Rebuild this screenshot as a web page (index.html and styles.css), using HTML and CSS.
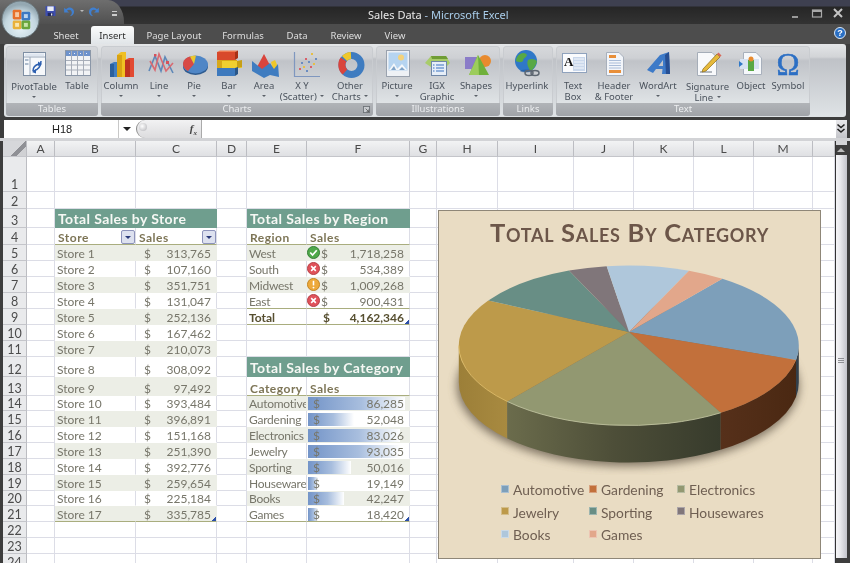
FILE: index.html
```html
<!DOCTYPE html>
<html lang="en">
<head>
<meta charset="utf-8">
<title>Sales Data - Microsoft Excel</title>
<link rel="stylesheet" href="styles.css">
</head>
<body>
<div class="app">
  <header class="titlebar">
    <div class="qat">
      <svg class="qi" viewBox="0 0 12 12"><rect x="0.5" y="0.5" width="11" height="11" rx="1" fill="#3f4fb0"/><rect x="2.5" y="1" width="7" height="5" fill="#e8ecf6"/><rect x="3" y="8" width="6" height="3.5" fill="#20285c"/><rect x="6.5" y="8.6" width="1.5" height="2.4" fill="#dfe3f0"/></svg>
      <svg class="qi gap1" viewBox="0 0 12 12"><path d="M2 2.5 V7 H6.5 L4.6 5.2 C6.4 3.7 8.6 4.4 9 6.6 C9.3 8 8.4 9.6 7 10.4 C9.8 10.3 11.4 8 11 5.6 C10.4 2.4 6.6 1 3.7 3.9 Z" fill="#3f7fd0"/></svg>
      <span class="qdrop"></span>
      <svg class="qi gap2" viewBox="0 0 12 12"><path d="M10 2.5 V7 H5.5 L7.4 5.2 C5.6 3.7 3.4 4.4 3 6.6 C2.7 8 3.6 9.6 5 10.4 C2.2 10.3 .6 8 1 5.6 C1.6 2.4 5.4 1 8.3 3.9 Z" fill="#3f7fd0"/></svg>
      <span class="qmore"></span>
    </div>
    <h1 class="wintitle">Sales Data <span class="dash">-</span> <span class="appname">Microsoft Excel</span></h1>
    <div class="winbtns">
      <svg class="wb" viewBox="0 0 12 12"><rect x="2" y="9" width="6" height="2" fill="#9a9a9a"/></svg>
      <svg class="wb" viewBox="0 0 12 12"><rect x="1.5" y="3" width="9" height="7" fill="none" stroke="#a8a8a8" stroke-width="1.2"/><rect x="1.5" y="3" width="9" height="2" fill="#a8a8a8"/></svg>
      <svg class="wb" viewBox="0 0 12 12"><path d="M2 2 L10 10 M10 2 L2 10" stroke="#c4c4c4" stroke-width="2"/></svg>
    </div>
  </header>

  <svg class="officebtn" viewBox="0 0 40 40">
    <defs>
      <radialGradient id="orb" cx="50%" cy="70%" r="60%"><stop offset="0" stop-color="#e8f4fa"/><stop offset=".7" stop-color="#c3d6df"/><stop offset="1" stop-color="#94a8b2"/></radialGradient>
    </defs>
    <circle cx="20" cy="20" r="19" fill="url(#orb)" stroke="#6d7a80"/>
    <rect x="12" y="10" width="9" height="10" rx="1.5" fill="#e8702a"/>
    <rect x="21" y="12" width="9" height="9" rx="1.5" fill="#3d79c4"/>
    <rect x="12" y="21" width="9" height="9" rx="1.5" fill="#e9b13a"/>
    <rect x="21" y="21" width="9" height="9" rx="1.5" fill="#6aa63c"/>
    <rect x="14.500" y="12.500" width="4" height="5" fill="#f6c8a4"/>
    <rect x="14.500" y="23.500" width="4" height="4" fill="#f8e6b0"/>
    <rect x="23.500" y="14.500" width="4" height="4" fill="#bcd4ee"/>
    <rect x="23.500" y="23.500" width="4" height="4" fill="#c8e4a8"/>
  </svg>

  <nav class="tabs">
    <a class="tab t51">Sheet</a>
    <a class="tab t43 active">Insert</a>
    <a class="tab t80">Page Layout</a>
    <a class="tab t58">Formulas</a>
    <a class="tab t50">Data</a>
    <a class="tab t48">Review</a>
    <a class="tab t50">View</a>
    <span class="help">?</span>
  </nav>

  <section class="ribbon">
    <div class="group gw92">
      <div class="items">
        <div class="btn w56">
          <svg class="ico" viewBox="0 0 30 30"><rect x="4.500" y="3.500" width="22" height="23" fill="#f6f8fb" stroke="#7f8fa4"/><path d="M5 8 H26 M11 8 V26" stroke="#9aa8ba"/><rect x="6" y="4.500" width="19" height="2.500" fill="#dfe6f0"/><rect x="6" y="10" width="3.500" height="2" fill="#aebccd"/><rect x="6" y="14" width="3.500" height="2" fill="#aebccd"/><path d="M14 22 C14 18 16 16 20 15 M22 12 C22 17 20 20 15 22" fill="none" stroke="#2c5fb0" stroke-width="1.500"/><path d="M19 12.500 L23 15 L19 17 Z M17 20 L13 23 L17 24.500 Z" fill="#2c5fb0"/></svg>
          <span class="lab low">PivotTable</span><i class="caret"></i>
        </div>
        <div class="btn w30">
          <svg class="ico" viewBox="0 0 30 30"><rect x="3.500" y="1.500" width="25" height="25" fill="#f2f3f5" stroke="#8b97a8"/><rect x="4" y="2" width="24" height="5" fill="#6e92cb"/><path d="M9.500 2 V26 M15.500 2 V26 M21.500 2 V26 M4 11.500 H28 M4 16 H28 M4 21 H28" stroke="#a7adb8"/><path d="M7 4.500 H8 M12 4.500 H13 M18 4.500 H19 M24 4.500 H25" stroke="#e8eefa"/></svg>
          <span class="lab">Table</span>
        </div>
      </div>
      <div class="gname">Tables</div>
    </div>

    <div class="group gw272">
      <div class="items">
        <div class="btn w40">
          <svg class="ico" viewBox="0 0 30 30"><path d="M4 15 L8 13 H12 V28 H4 Z" fill="#3f7cc0"/><rect x="4" y="15" width="4" height="13" fill="#2b5f9c"/><path d="M11 6 L15 3 H20 V28 H11 Z" fill="#f0c023"/><rect x="11" y="6" width="5" height="22" fill="#d8a213"/><path d="M19 11 L23 9 H28 V28 H19 Z" fill="#e24a32"/><rect x="19" y="11" width="5" height="17" fill="#bd3220"/></svg>
          <span class="lab">Column</span><i class="caret"></i>
        </div>
        <div class="btn w36">
          <svg class="ico" viewBox="0 0 30 30"><path d="M5 22 L11 7 L17 22 L21 8 L29 24" fill="none" stroke="#5f88b8" stroke-width="1.600"/><path d="M6 12 L11 21 L15 5 L22 22 L29 14" fill="none" stroke="#d86a72" stroke-width="1.600"/><rect x="22" y="12" width="3" height="3" fill="#d8505a"/><rect x="10" y="5" width="2.500" height="2.500" fill="#d8505a"/></svg>
          <span class="lab">Line</span><i class="caret"></i>
        </div>
        <div class="btn w34">
          <svg class="ico" viewBox="0 0 30 30"><ellipse cx="16.500" cy="17.500" rx="12.500" ry="8.500" fill="#2e5b90"/><ellipse cx="16.500" cy="15.500" rx="12.500" ry="9" fill="#4f86c6"/><path d="M15 15 L11 7.500 C7 8.500 4 11.500 4 15 C4 18 6 20.500 9 22 Z" fill="#d84a44"/><path d="M15 15 L11 7.500 C13 6.800 15 6.500 17 6.500 Z" fill="#efc72a"/></svg>
          <span class="lab">Pie</span><i class="caret"></i>
        </div>
        <div class="btn w36">
          <svg class="ico" viewBox="0 0 30 30"><rect x="3" y="11" width="20" height="8" fill="#d8a818"/><rect x="8" y="12" width="20" height="7" fill="#f0cf30"/><path d="M23 12 L28 11 V18 L23 19 Z" fill="#c79f15"/><rect x="3" y="3" width="18" height="8" fill="#d8482c"/><path d="M3 3 L6 1.500 H24 L21 3 Z" fill="#ef7a52"/><path d="M21 3 L24 1.500 V9 L21 11 Z" fill="#a93016"/><rect x="3" y="19" width="18" height="8" fill="#3d79bd"/><path d="M21 19 L24 18 V25 L21 27 Z" fill="#2a5688"/></svg>
          <span class="lab">Bar</span><i class="caret"></i>
        </div>
        <div class="btn w34">
          <svg class="ico" viewBox="0 0 30 30"><path d="M15 5 L23 20 L12 24 L8 18 Z" fill="#d9443c"/><path d="M22 13 L26 11 L29 18 L24 22 Z" fill="#efc72a"/><path d="M3 12 L13 20 L21 14 L25 20 L29 15 L30 28 L21 26 L15 29 L3 22 Z" fill="#3f7cc0"/></svg>
          <span class="lab">Area</span><i class="caret"></i>
        </div>
        <div class="btn w42">
          <svg class="ico over" viewBox="0 0 30 30"><path d="M7.500 3 V27.500 H33" fill="none" stroke="#7f97bf" stroke-width="1.200"/><g fill="#d8606a"><rect x="12" y="19" width="2" height="2"/><rect x="18" y="9" width="2" height="2"/><rect x="23" y="17" width="2" height="2"/></g><g fill="#6a8cc0"><rect x="14" y="13" width="2" height="2"/><rect x="21" y="12" width="2" height="2"/><rect x="28" y="9" width="2" height="2"/><rect x="19" y="21" width="2" height="2"/></g><g fill="#e6bf45"><rect x="24" y="4" width="2" height="2"/><rect x="16" y="17" width="2" height="2"/><rect x="26" y="14" width="2" height="2"/></g></svg>
          <span class="lab">X Y<br>(Scatter) <i class="caret inl"></i></span>
        </div>
        <div class="btn w54">
          <svg class="ico" viewBox="0 0 30 30"><circle cx="16.500" cy="16" r="9.500" fill="none" stroke="#3f7cc0" stroke-width="7"/><path d="M8.500 10.500 A9.500 9.500 0 0 0 10 23" fill="none" stroke="#d9443c" stroke-width="7"/><path d="M9.500 9.500 A9.500 9.500 0 0 1 16 6.500" fill="none" stroke="#efc72a" stroke-width="7"/></svg>
          <span class="lab">Other<br>Charts <i class="caret inl"></i></span>
        </div>
      </div>
      <div class="gname">Charts<svg class="launch" viewBox="0 0 8 8"><rect x=".5" y=".5" width="7" height="7" fill="#c9ccd0" stroke="#6e7378"/><path d="M3 3 L6.500 6.500 M6.500 4 V6.500 H4" fill="none" stroke="#444" stroke-width=".8"/></svg></div>
    </div>

    <div class="group gw124">
      <div class="items">
        <div class="btn w42">
          <svg class="ico" viewBox="0 0 30 30"><rect x="4.500" y="1.500" width="23" height="26" fill="#eef1f5" stroke="#9aa2ae"/><rect x="6.500" y="3.500" width="19" height="18" fill="#b6d4f0"/><circle cx="19" cy="8.500" r="3" fill="#f4d27a"/><path d="M7 21 L12 14 L16 21 Z M14 21 L20 15 L25 21 Z" fill="#f4f7fa"/><path d="M9 21 L12 17 L14 21 Z M17 21 L20 18 L23 21 Z" fill="#7fa3c8"/></svg>
          <span class="lab">Picture</span><i class="caret"></i>
        </div>
        <div class="btn w38">
          <svg class="ico" viewBox="0 0 30 30"><path d="M3 14 L9 7 H24 L28 14 L24 18 H9 Z" fill="#a8cc6a"/><path d="M9 7 H24 L26 10 H10 Z" fill="#6f9c35"/><rect x="9.500" y="12.500" width="15" height="14" fill="#e6eef8" stroke="#6f87a8"/><path d="M14 16 H22 M14 19 H22 M14 22 H22" stroke="#3a72c0"/><path d="M11 16 H12.500 M11 19 H12.500 M11 22 H12.500" stroke="#3a72c0"/></svg>
          <span class="lab">IGX<br>Graphic</span>
        </div>
        <div class="btn w40">
          <svg class="ico" viewBox="0 0 30 30"><rect x="4" y="8" width="13" height="12" fill="#8a7cc8"/><circle cx="24" cy="12" r="6" fill="#e88a2e"/><path d="M17 6 L28 26 H8 Z" fill="#6fb03a"/><path d="M17 6 L18 26 H8 Z" fill="#9ccc5c"/></svg>
          <span class="lab">Shapes</span><i class="caret"></i>
        </div>
      </div>
      <div class="gname">Illustrations</div>
    </div>

    <div class="group gw50">
      <div class="items">
        <div class="btn w48">
          <svg class="ico" viewBox="0 0 30 30"><circle cx="14" cy="12" r="11" fill="#2f78c8"/><path d="M8 5 C11 3 14 4 15 6 C14 9 11 9 11 12 C9 14 6 13 4 12 C4 9 6 6 8 5 Z M16 11 C19 9 23 10 25 12 C24 17 21 21 18 22 C17 19 14 15 16 11 Z" fill="#58a845"/><ellipse cx="14" cy="22" rx="6" ry="1.500" fill="#1f528f" opacity=".5"/><ellipse cx="17" cy="24" rx="4" ry="2.500" fill="none" stroke="#5d6670" stroke-width="1.500"/><ellipse cx="23" cy="24" rx="4" ry="2.500" fill="none" stroke="#5d6670" stroke-width="1.500"/></svg>
          <span class="lab">Hyperlink</span>
        </div>
      </div>
      <div class="gname">Links</div>
    </div>

    <div class="group gw254">
      <div class="items">
        <div class="btn w34">
          <svg class="ico" viewBox="0 0 30 30"><rect x="4.500" y="4.500" width="24" height="19" fill="#fafbfd" stroke="#8fa2bd"/><rect x="15" y="8" width="12" height="14" fill="#cad8ec"/><path d="M16 10 H26 M16 13 H26 M16 16 H26 M16 19 H26" stroke="#f4f7fb"/><text x="6" y="17" class="boxa">A</text></svg>
          <span class="lab">Text<br>Box</span>
        </div>
        <div class="btn w48">
          <svg class="ico" viewBox="0 0 30 30"><path d="M7.500 3.500 H20 L24.500 8 V26.500 H7.500 Z" fill="#f2f5fa" stroke="#a8b0bc"/><rect x="10" y="6" width="7" height="3" fill="#e88f3a"/><path d="M10 11.500 H22 M10 14 H22 M10 16.500 H22 M10 19 H22" stroke="#a9bcd8"/><rect x="10" y="21" width="12" height="3" fill="#e88f3a"/></svg>
          <span class="lab">Header<br>&amp; Footer</span>
        </div>
        <div class="btn w40">
          <svg class="ico" viewBox="0 0 30 30"><path d="M4 21 L17 6 L26 3 L27 25 L19 25 L19.500 20 L13 20 L10 24 Z M15.500 17 L20 17 L20 11 Z" fill="#3d7ac8" fill-rule="evenodd"/><path d="M26 3 L27 25 L23 25 L22 6 Z" fill="#274f92"/></svg>
          <span class="lab">WordArt</span><i class="caret"></i>
        </div>
        <div class="btn w59">
          <svg class="ico" viewBox="0 0 30 30"><path d="M4.500 3.500 H19 L23.500 8 V26.500 H4.500 Z" fill="#f8f9fb" stroke="#a5adb8"/><path d="M7 23 H19" stroke="#6f7884"/><path d="M10 20 L24 5 L27 8 L13 22 L9 23 Z" fill="#e6b93a" stroke="#8a6a18" stroke-width=".7"/><path d="M24 5 L25.500 3.500 L28.500 6.500 L27 8 Z" fill="#d86a5a"/></svg>
          <span class="lab low">Signature<br>Line <i class="caret inl"></i></span>
        </div>
        <div class="btn w28">
          <svg class="ico" viewBox="0 0 30 30"><path d="M7.500 3.500 H20 L25.500 9 V25.500 H7.500 Z" fill="#f6f8fb" stroke="#a8b0bc"/><rect x="4" y="10" width="19" height="10" fill="#d6e2f2"/><path d="M3 12 L7 15 L3 18 Z" fill="#2f78c8"/><rect x="12" y="11" width="6" height="11" fill="#58a845"/><circle cx="15" cy="10" r="2.500" fill="#e88a2e"/></svg>
          <span class="lab">Object</span>
        </div>
        <div class="btn w46">
          <span class="omega">Ω</span>
          <span class="lab">Symbol</span>
        </div>
      </div>
      <div class="gname">Text</div>
    </div>
  </section>

  <section class="formula">
    <div class="namebox">H18</div>
    <div class="namedrop"></div>
    <div class="fxpill"><i class="knob"></i><em class="fx">f<sub>x</sub></em></div>
    <div class="finput"></div>
    <div class="fexpand"><svg viewBox="0 0 10 12"><path d="M1.500 1.500 L5 4.500 L8.500 1.500 M1.500 6 L5 9 L8.500 6" fill="none" stroke="#222" stroke-width="1.600"/></svg></div>
  </section>

  <main class="workarea">
    <table class="sheet">
      <colgroup>
        <col class="c24"><col class="c28"><col class="c81"><col class="c81"><col class="c30"><col class="c60"><col class="c103"><col class="c27"><col class="c61"><col class="c76"><col class="c60"><col class="c60"><col class="c60"><col class="c59"><col class="c22">
      </colgroup>
      <thead>
        <tr class="h16 colhdr"><th class="corner"></th><th>A</th><th>B</th><th>C</th><th>D</th><th>E</th><th>F</th><th>G</th><th>H</th><th>I</th><th>J</th><th>K</th><th>L</th><th>M</th><th></th></tr>
      </thead>
      <tbody>
        <tr class="h35"><th>1</th><td></td><td></td><td></td><td></td><td></td><td></td><td></td><td></td><td></td><td></td><td></td><td></td><td></td><td></td></tr>
        <tr class="h17"><th>2</th><td></td><td></td><td></td><td></td><td></td><td></td><td></td><td></td><td></td><td></td><td></td><td></td><td></td><td></td></tr>
        <tr class="h19"><th>3</th><td></td><td class="ttl" colspan="2">Total Sales by Store</td><td></td><td class="ttl" colspan="2">Total Sales by Region</td><td></td><td></td><td></td><td></td><td></td><td></td><td></td><td></td></tr>
        <tr class="h17"><th>4</th><td></td><td class="head"><div class="hwrap">Store<span class="filter"></span></div></td><td class="head"><div class="hwrap">Sales<span class="filter"></span></div></td><td></td><td class="head">Region</td><td class="head">Sales</td><td></td><td></td><td></td><td></td><td></td><td></td><td></td><td></td></tr>
        <tr class="h16"><th>5</th><td></td><td class="band nm">Store 1</td><td class="band"><div class="amt"><span>$</span><span>313,765</span></div></td><td></td><td class="band nm">West</td><td class="band"><div class="amt rg"><svg class="flag" viewBox="0 0 14 14"><circle cx="7" cy="7" r="6.500" fill="#4fa84a" stroke="#2f7a30"/><path d="M3.500 7 L6 9.800 L10.500 4.500" fill="none" stroke="#fff" stroke-width="1.800"/></svg><span>$</span><span>1,718,258</span></div></td><td></td><td></td><td></td><td></td><td></td><td></td><td></td><td></td></tr>
        <tr class="h16"><th>6</th><td></td><td class="white nm">Store 2</td><td class="white"><div class="amt"><span>$</span><span>107,160</span></div></td><td></td><td class="white nm">South</td><td class="white"><div class="amt rg"><svg class="flag" viewBox="0 0 14 14"><circle cx="7" cy="7" r="6.500" fill="#e0525a" stroke="#b23a40"/><path d="M4.500 4.500 L9.500 9.500 M9.500 4.500 L4.500 9.500" stroke="#fff" stroke-width="1.700"/></svg><span>$</span><span>534,389</span></div></td><td></td><td></td><td></td><td></td><td></td><td></td><td></td><td></td></tr>
        <tr class="h16"><th>7</th><td></td><td class="band nm">Store 3</td><td class="band"><div class="amt"><span>$</span><span>351,751</span></div></td><td></td><td class="band nm">Midwest</td><td class="band"><div class="amt rg"><svg class="flag" viewBox="0 0 14 14"><circle cx="7" cy="7" r="6.500" fill="#eda93a" stroke="#c07f1c"/><path d="M7 3 V8" stroke="#fff" stroke-width="1.700"/><circle cx="7" cy="10.300" r="1" fill="#fff"/></svg><span>$</span><span>1,009,268</span></div></td><td></td><td></td><td></td><td></td><td></td><td></td><td></td><td></td></tr>
        <tr class="h16"><th>8</th><td></td><td class="white nm">Store 4</td><td class="white"><div class="amt"><span>$</span><span>131,047</span></div></td><td></td><td class="white nm tline">East</td><td class="white tline"><div class="amt rg"><svg class="flag" viewBox="0 0 14 14"><circle cx="7" cy="7" r="6.500" fill="#e0525a" stroke="#b23a40"/><path d="M4.500 4.500 L9.500 9.500 M9.500 4.500 L4.500 9.500" stroke="#fff" stroke-width="1.700"/></svg><span>$</span><span>900,431</span></div></td><td></td><td></td><td></td><td></td><td></td><td></td><td></td><td></td></tr>
        <tr class="h16"><th>9</th><td></td><td class="band nm">Store 5</td><td class="band"><div class="amt"><span>$</span><span>252,136</span></div></td><td></td><td class="white total tline">Total</td><td class="white total tline resize"><div class="amt rgt"><span>$</span><span>4,162,346</span></div></td><td></td><td></td><td></td><td></td><td></td><td></td><td></td><td></td></tr>
        <tr class="h16"><th>10</th><td></td><td class="white nm">Store 6</td><td class="white"><div class="amt"><span>$</span><span>167,462</span></div></td><td></td><td></td><td></td><td></td><td></td><td></td><td></td><td></td><td></td><td></td><td></td></tr>
        <tr class="h16"><th>11</th><td></td><td class="band nm">Store 7</td><td class="band"><div class="amt"><span>$</span><span>210,073</span></div></td><td></td><td></td><td></td><td></td><td></td><td></td><td></td><td></td><td></td><td></td><td></td></tr>
        <tr class="h20"><th>12</th><td></td><td class="white nm">Store 8</td><td class="white"><div class="amt"><span>$</span><span>308,092</span></div></td><td></td><td class="ttl" colspan="2">Total Sales by Category</td><td></td><td></td><td></td><td></td><td></td><td></td><td></td><td></td></tr>
        <tr class="h19"><th>13</th><td></td><td class="band nm">Store 9</td><td class="band"><div class="amt"><span>$</span><span>97,492</span></div></td><td></td><td class="head">Category</td><td class="head">Sales</td><td></td><td></td><td></td><td></td><td></td><td></td><td></td><td></td></tr>
        <tr class="h15"><th>14</th><td></td><td class="white nm">Store 10</td><td class="white"><div class="amt"><span>$</span><span>393,484</span></div></td><td></td><td class="band nm">Automotive</td><td class="band"><div class="amt cat bar" style="background-size:97px 13px"><span>$</span><span>86,285</span></div></td><td></td><td></td><td></td><td></td><td></td><td></td><td></td><td></td></tr>
        <tr class="h16"><th>15</th><td></td><td class="band nm">Store 11</td><td class="band"><div class="amt"><span>$</span><span>396,891</span></div></td><td></td><td class="white nm">Gardening</td><td class="white"><div class="amt cat bar" style="background-size:46px 13px"><span>$</span><span>52,048</span></div></td><td></td><td></td><td></td><td></td><td></td><td></td><td></td><td></td></tr>
        <tr class="h16"><th>16</th><td></td><td class="white nm">Store 12</td><td class="white"><div class="amt"><span>$</span><span>151,168</span></div></td><td></td><td class="band nm">Electronics</td><td class="band"><div class="amt cat bar" style="background-size:92px 13px"><span>$</span><span>83,026</span></div></td><td></td><td></td><td></td><td></td><td></td><td></td><td></td><td></td></tr>
        <tr class="h16"><th>17</th><td></td><td class="band nm">Store 13</td><td class="band"><div class="amt"><span>$</span><span>251,390</span></div></td><td></td><td class="white nm">Jewelry</td><td class="white"><div class="amt cat bar" style="background-size:92px 13px"><span>$</span><span>93,035</span></div></td><td></td><td></td><td></td><td></td><td></td><td></td><td></td><td></td></tr>
        <tr class="h16"><th>18</th><td></td><td class="white nm">Store 14</td><td class="white"><div class="amt"><span>$</span><span>392,776</span></div></td><td></td><td class="band nm">Sporting</td><td class="band"><div class="amt cat bar" style="background-size:43px 13px"><span>$</span><span>50,016</span></div></td><td></td><td></td><td></td><td></td><td></td><td></td><td></td><td></td></tr>
        <tr class="h16"><th>19</th><td></td><td class="band nm">Store 15</td><td class="band"><div class="amt"><span>$</span><span>259,654</span></div></td><td></td><td class="white nm">Houseware</td><td class="white"><div class="amt cat bar" style="background-size:10px 13px"><span>$</span><span>19,149</span></div></td><td></td><td></td><td></td><td></td><td></td><td></td><td></td><td></td></tr>
        <tr class="h15"><th>20</th><td></td><td class="white nm">Store 16</td><td class="white"><div class="amt"><span>$</span><span>225,184</span></div></td><td></td><td class="band nm">Books</td><td class="band"><div class="amt cat bar" style="background-size:36px 13px"><span>$</span><span>42,247</span></div></td><td></td><td></td><td></td><td></td><td></td><td></td><td></td><td></td></tr>
        <tr class="h16"><th>21</th><td></td><td class="band nm tline">Store 17</td><td class="band tline resize"><div class="amt"><span>$</span><span>335,785</span></div></td><td></td><td class="white nm tline">Games</td><td class="white tline resize"><div class="amt cat bar" style="background-size:10px 13px"><span>$</span><span>18,420</span></div></td><td></td><td></td><td></td><td></td><td></td><td></td><td></td><td></td></tr>
        <tr class="h16"><th>22</th><td></td><td></td><td></td><td></td><td></td><td></td><td></td><td></td><td></td><td></td><td></td><td></td><td></td><td></td></tr>
        <tr class="h16"><th>23</th><td></td><td></td><td></td><td></td><td></td><td></td><td></td><td></td><td></td><td></td><td></td><td></td><td></td><td></td></tr>
        <tr class="h16"><th>24</th><td></td><td></td><td></td><td></td><td></td><td></td><td></td><td></td><td></td><td></td><td></td><td></td><td></td><td></td></tr>
      </tbody>
    </table>

    <div class="scroll">
      <div class="sgrip"></div>
      <div class="sup"></div>
      <div class="strack"><span class="sthumb"></span></div>
      <div class="sfoot"></div>
    </div>

    <figure class="chart">
      <figcaption class="ctitle">Total Sales By Category</figcaption>
      <svg class="pie" viewBox="438 250 383 225">
        <defs>
          <filter id="soft" x="-20%" y="-30%" width="140%" height="160%"><feGaussianBlur stdDeviation="5"/></filter>
          <linearGradient id="sideE" gradientUnits="userSpaceOnUse" x1="507" y1="0" x2="721" y2="0"><stop offset="0" stop-color="#6b6c4c"/><stop offset=".5" stop-color="#4d4e38"/><stop offset="1" stop-color="#373b2c"/></linearGradient>
          <linearGradient id="sideJ" gradientUnits="userSpaceOnUse" x1="459" y1="0" x2="507" y2="0"><stop offset="0" stop-color="#9c7f38"/><stop offset="1" stop-color="#a88a40"/></linearGradient>
          <linearGradient id="sideG" gradientUnits="userSpaceOnUse" x1="721" y1="0" x2="796" y2="0"><stop offset="0" stop-color="#56301a"/><stop offset="1" stop-color="#4a2812"/></linearGradient>
        </defs>
        <ellipse cx="628" cy="386" rx="171" ry="80" fill="#6a5f50" opacity=".85" filter="url(#soft)"/>
        <path d="M458.800 345.500 A170 80 0 0 0 507.300 401.500 V438.500 A170 80 0 0 1 458.800 382.500 Z" fill="url(#sideJ)"/>
        <path d="M507.300 401.500 A170 80 0 0 0 720.700 412.800 V449.800 A170 80 0 0 1 507.300 438.500 Z" fill="url(#sideE)"/>
        <path d="M720.700 412.800 A170 80 0 0 0 796 360 V397 A170 80 0 0 1 720.700 449.800 Z" fill="url(#sideG)"/>
        <path d="M796 360 A170 80 0 0 0 798.800 345.500 V382.500 A170 80 0 0 1 796 397 Z" fill="#333f4a"/>
        <path d="M629 332 L722.300 278.700 A170 80 0 0 1 796 360 Z" fill="#7d9fba"/>
        <path d="M629 332 L796 360 A170 80 0 0 1 720.700 412.800 Z" fill="#c2703b"/>
        <path d="M629 332 L720.700 412.800 A170 80 0 0 1 507.300 401.500 Z" fill="#929871"/>
        <path d="M629 332 L507.300 401.500 A170 80 0 0 1 488.300 300.500 Z" fill="#bd9a4a"/>
        <path d="M629 332 L488.300 300.500 A170 80 0 0 1 569 270.600 Z" fill="#688e85"/>
        <path d="M629 332 L569 270.600 A170 80 0 0 1 606.700 266.200 Z" fill="#80767a"/>
        <path d="M629 332 L606.700 266.200 A170 80 0 0 1 689 270.700 Z" fill="#afc7db"/>
        <path d="M629 332 L689 270.700 A170 80 0 0 1 722.300 278.700 Z" fill="#e2a78b"/>
        <path d="M507.300 401.500 A170 80 0 0 0 720.700 412.800" fill="none" stroke="#c5c9a4" stroke-width=".8"/>
        <path d="M458.800 345.500 A170 80 0 0 0 507.300 401.500" fill="none" stroke="#e3c069" stroke-width=".8"/>
      </svg>
      <ul class="legend">
        <li><i class="sw s1"></i>Automotive</li>
        <li><i class="sw s2"></i>Gardening</li>
        <li><i class="sw s3"></i>Electronics</li>
        <li><i class="sw s4"></i>Jewelry</li>
        <li><i class="sw s5"></i>Sporting</li>
        <li><i class="sw s6"></i>Housewares</li>
        <li><i class="sw s7"></i>Books</li>
        <li><i class="sw s8"></i>Games</li>
      </ul>
    </figure>
  </main>
</div>
</body>
</html>
```

FILE: styles.css
```css
* { box-sizing: border-box; }
html, body { margin: 0; padding: 0; }
body { width: 850px; height: 563px; overflow: hidden; background: #3a3a3a; font-family: "Noto Sans", sans-serif; }
.app { position: relative; width: 850px; height: 563px; overflow: hidden; background: #3d3d3d; filter: blur(.4px); }

/* title bar */
.titlebar { position: relative; display: flex; align-items: center; height: 24px; padding-top: 5px; background: linear-gradient(#3e4050 0, #3e4050 6px, #262626 7px, #333 24px); }
.qat { position: absolute; left: 0; top: 0; width: 124px; height: 24px; padding: 5px 0 0 45px; display: flex; align-items: flex-start; background: linear-gradient(#6e6e6e, #505050); border-top-right-radius: 16px 22px; }
.qi { width: 11px; height: 12px; }
.gap1 { margin-left: 6px; width: 13px; height: 13px; }
.gap2 { margin-left: 4px; width: 13px; height: 13px; }
.qdrop { width: 0; height: 0; margin: 5px 0 0 5px; border: 2.5px solid transparent; border-top-color: #bbb; border-bottom: 0; }
.qmore { width: 5px; height: 5px; margin: 6px 0 0 11px; border-top: 1px solid #ccc; background: linear-gradient(transparent 2px, #ccc 2px); }
.wintitle { margin: 0 0 0 368px; font: 400 11px/14px "Noto Sans", sans-serif; color: #e8e8e8; white-space: nowrap; }
.dash { color: #a8c4e0; }
.appname { color: #a9cdea; }
.winbtns { position: absolute; right: 6px; top: 7px; display: flex; gap: 9px; }
.wb { width: 12px; height: 12px; }
.officebtn { position: absolute; left: 1px; top: 0; width: 39px; height: 39px; z-index: 3; }

/* tabs */
.tabs { display: flex; height: 20px; padding: 2px 4px 0 40px; background: #4d4d4d; align-items: stretch; }
.tab { display: block; text-align: center; font-size: 9.500px; line-height: 19px; color: #dfdfdf; white-space: nowrap; }
.t51 { width: 51px; padding-left: 1px; } .t43 { width: 43px; } .t80 { width: 80px; } .t58 { width: 58px; } .t50 { width: 50px; } .t48 { width: 48px; }
.active { color: #2c2c2c; background: linear-gradient(#fbfcfc, #e1e5e8); border-radius: 3px 3px 0 0; }
.help { width: 12px; height: 12px; margin: 1px 0 0 auto; border-radius: 50%; background: #2a6fc4; border: 1px solid #dbe7f4; color: #fff; font: 700 9px/10px "Liberation Sans", sans-serif; text-align: center; }

/* ribbon */
.ribbon { display: flex; gap: 3px; height: 73px; margin: 0 4px; padding: 2px; border-radius: 3px; background: linear-gradient(#e4e6e8 0, #d2d4d7 13px, #bfc2c7 15px, #dfe3e6 100%); }
.group { flex: none; display: flex; flex-direction: column; height: 70px; border-radius: 3px; border: 1px solid #c9ccd0; overflow: visible; background: linear-gradient(#d6d8db 0, #ced0d4 11px, #c0c3c8 14px, #e8ecee 100%); }
.gw92 { width: 92px; } .gw272 { width: 272px; } .gw124 { width: 124px; } .gw50 { width: 50px; } .gw254 { width: 254px; }
.items { display: flex; flex: 1; margin: -1px; }
.gname { position: relative; height: 13px; margin: 0 -1px -1px; background: linear-gradient(#b1b4b8, #a0a3a8); color: #eceef0; font-size: 9.500px; line-height: 12px; text-align: center; border-radius: 0 0 3px 3px; }
.launch { position: absolute; right: 3px; top: 3px; width: 7px; height: 7px; }
.btn { flex: none; display: flex; flex-direction: column; align-items: center; padding-top: 3px; color: #4a525c; }
.w28 { width: 28px; } .w30 { width: 30px; } .w34 { width: 34px; } .w36 { width: 36px; } .w38 { width: 38px; } .w40 { width: 40px; } .w42 { width: 42px; } .w46 { width: 46px; } .w48 { width: 48px; } .w54 { width: 54px; margin-right: -4px; } .w56 { width: 56px; } .w59 { width: 59px; }
.ico { flex: none; width: 30px; height: 30px; }
.over { overflow: visible; }
.boxa { font: 700 13px "Liberation Serif", serif; fill: #111; }
.omega { display: block; height: 30px; font: 400 31px/32px "Liberation Serif", serif; color: #2c6fc4; -webkit-text-stroke: .5px #2c6fc4; }
.lab { display: block; margin-top: 1px; font-size: 9.500px; line-height: 11px; text-align: center; white-space: nowrap; }
.low { margin-top: 2px; }
.caret { display: block; width: 0; height: 0; margin-top: 4px; border: 2.500px solid transparent; border-top-color: #5a6068; border-bottom: 0; }
.inl { display: inline-block; margin: 0 0 2px 1px; vertical-align: middle; }

/* formula bar */
.formula { position: relative; display: flex; height: 18px; margin: 3px 3px 0 4px; background: #fff; }
.namebox { width: 115px; padding-left: 48px; font: 400 11px/18px "Liberation Sans", sans-serif; color: #222; border-right: 1px solid #c8c8c8; }
.namedrop { width: 17px; position: relative; }
.namedrop::after { content: ""; position: absolute; left: 4px; top: 7px; border: 4px solid transparent; border-top-color: #222; border-bottom: 0; }
.fxpill { position: relative; width: 66px; background: linear-gradient(#f2f2f3, #dcdcde); border-right: 1px solid #aaa; border-radius: 9px 0 0 9px; border-left: 1px solid #8a8a8a; }
.knob { position: absolute; left: 2px; top: 3px; width: 8px; height: 8px; border-radius: 50%; background: radial-gradient(circle at 40% 40%, #fff, #b0b0b4); }
.fx { position: absolute; right: 4px; top: 1px; font: italic 700 11px/14px "Liberation Serif", serif; color: #444; }
.fx sub { font-size: 7px; }
.finput { flex: 1; background: #fff; }
.fexpand { width: 11px; margin-left: 2px; padding-top: 3px; background: linear-gradient(#e9e9ec, #c4c5ca); }
.fexpand svg { display: block; width: 10px; height: 12px; }

/* sheet */
.workarea { position: relative; display: flex; height: 425px; padding: 3px 0 0 3px; overflow: hidden; background: linear-gradient(#d2d3d6 0, #d2d3d6 3px, #3d3d3d 3px); }
.sheet { flex: none; width: 832px; table-layout: fixed; border-collapse: separate; border-spacing: 0; background: #fff; align-self: flex-start; }
.c24 { width: 24px; } .c28 { width: 28px; } .c81 { width: 81px; } .c30 { width: 30px; } .c60 { width: 60px; } .c103 { width: 103px; } .c27 { width: 27px; } .c61 { width: 61px; } .c76 { width: 76px; } .c59 { width: 59px; } .c22 { width: 22px; }
.h15 { height: 15px; } .h16 { height: 16px; } .h17 { height: 17px; } .h19 { height: 19px; } .h20 { height: 20px; } .h35 { height: 35px; }
.sheet th, .sheet td { padding: 0; overflow: hidden; white-space: nowrap; border-right: 1px solid #dcdde6; border-bottom: 1px solid #dcdde6; vertical-align: bottom; }
.sheet th { font: 400 12.500px/12px "Lato", sans-serif; color: #4b4b4b; text-align: center; background: linear-gradient(#f2f3f4, #dfe0e3); border-right-color: #bcbdc2; border-bottom-color: #c4c5ca; }
.sheet tbody th { background: #e9eaec; }
.colhdr th { vertical-align: middle; line-height: 14px; font-size: 12px; }
.corner { background: linear-gradient(135deg, #d6d7da 60%, #8f9095 60%, #8f9095 75%, #d0d1d4 75%) !important; }
.sheet td { font: 400 12px/13px "Lato", sans-serif; color: #77766a; }
.ttl { padding: 1px 0 0 3px !important; background: #6f9e8e; border-color: #6f9e8e !important; font: 700 14px/17px "Lato", sans-serif !important; letter-spacing: .4px; color: #f6f8f4 !important; vertical-align: middle !important; }
.head { padding: 0 0 0 3px !important; font-weight: 700 !important; letter-spacing: .5px; color: #7d7556 !important; border-bottom-color: #a9ad7e !important; background: #fff; }
.hwrap { display: flex; justify-content: space-between; align-items: flex-end; }
.filter { position: relative; width: 14px; height: 14px; background: #dde1ef; border: 1px solid #8d93bb; border-radius: 2px; }
.filter::after { content: ""; position: absolute; left: 3px; top: 5px; border: 3px solid transparent; border-top-color: #2b3a7a; border-bottom: 0; }
.band { background: #eceee6; border-bottom-color: #eceee6 !important; border-right-color: #eceee6 !important; }
.white { background: #fff; border-bottom-color: #fff !important; }
.nm { padding-left: 2px !important; }
.sheet td.nm:nth-child(6) { letter-spacing: -.25px; }
.tline { border-bottom-color: #a9ad7e !important; }
.total { font-weight: 700 !important; color: #574f30 !important; padding-left: 2px !important; border-bottom-color: #a9ad7e !important; }
.amt { display: flex; justify-content: space-between; align-items: flex-end; padding: 0 5px 0 8px; }
.rg { padding-left: 0; justify-content: flex-start; }
.rg span:last-child { margin-left: auto; }
.rgt { padding-left: 14px; }
.cat { padding-left: 6px; }
.flag { flex: none; width: 13px; height: 13px; margin: 0 1px 1px 0; }
.bar { background-image: linear-gradient(90deg, #7394c8, #a8bede 55%, #fff); background-repeat: no-repeat; background-position: 1px center; }
.resize { background-image: linear-gradient(135deg, transparent 50%, #2b4fa8 50%); background-repeat: no-repeat; background-position: right bottom; background-size: 4px 4px; }

/* scrollbar */
.scroll { flex: none; display: flex; flex-direction: column; width: 12px; height: 422px; border-left: 1px solid #333; }
.sgrip { height: 4px; background: #d4d5d8; }
.sup { position: relative; height: 10px; background: #3e3e3e; }
.sup::after { content: ""; position: absolute; left: 1px; top: 3px; border: 4px solid transparent; border-bottom-color: #bcbcbc; border-top: 0; }
.strack { position: relative; flex: 1; background: linear-gradient(90deg, #f5f5f7, #e8e8ec 40%, #c3c4cb); }
.sthumb { position: absolute; left: 2px; top: 203px; width: 6px; height: 6px; background: repeating-linear-gradient(#8f9095 0 1px, transparent 1px 2px); }
.sfoot { height: 5px; background: #3e3e3e; }

/* chart */
.chart { position: absolute; left: 438px; top: 72px; width: 383px; height: 349px; margin: 0; background: #e9dcc3; border: 1.500px solid #8f8778; }
.ctitle { height: 38px; padding-top: 6px; text-align: center; font: 700 25.500px/30px "Lato", sans-serif; font-variant: small-caps; letter-spacing: .7px; color: #6c5649; }
.pie { display: block; width: 383px; height: 225px; margin: 1px 0 0 -1.500px; }
.legend { display: grid; grid-template-columns: 88px 88px 110px; grid-auto-rows: 22.500px; margin: 4px 0 0 62px; padding: 0; list-style: none; font: 400 13.800px/22px "Lato", sans-serif; color: #6f5f52; }
.legend li { display: flex; align-items: center; gap: 4px; white-space: nowrap; }
.sw { flex: none; width: 8px; height: 8px; margin-top: -3px; border: 1px solid rgba(255,255,255,.35); }
.s1 { background: #7d9fba; } .s2 { background: #c2703b; } .s3 { background: #929871; } .s4 { background: #bd9a4a; } .s5 { background: #688e85; } .s6 { background: #80767a; } .s7 { background: #afc7db; } .s8 { background: #e2a78b; }
```
